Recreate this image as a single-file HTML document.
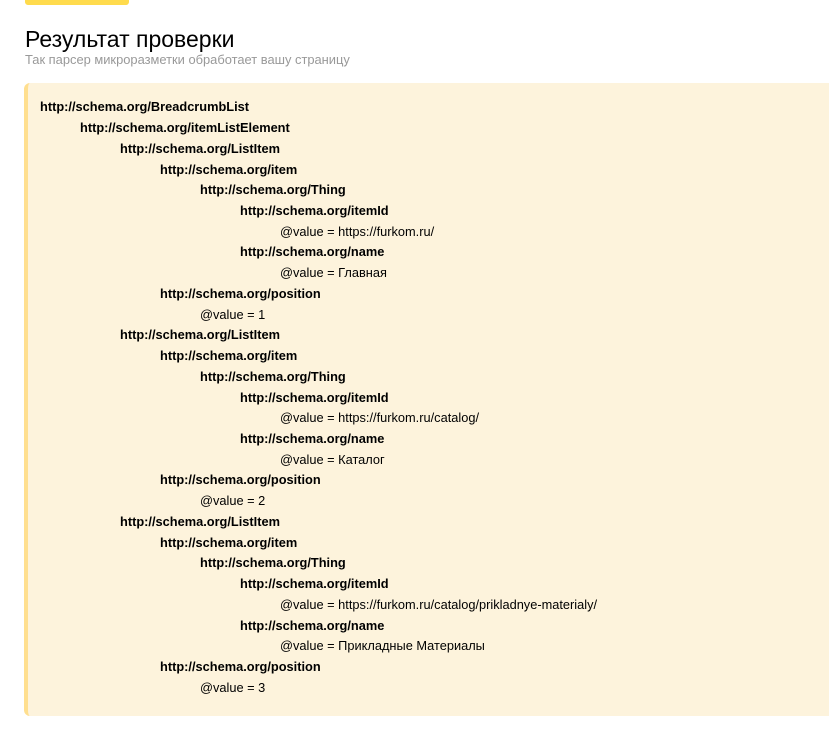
<!DOCTYPE html>
<html><head><meta charset="utf-8"><style>
html,body{margin:0;padding:0;background:#fff;width:829px;height:733px;overflow:hidden;font-family:"Liberation Sans",Arial,sans-serif;}
.bar{position:absolute;left:25px;top:0;width:104px;height:5px;background:#ffdb4d;border-radius:0 0 3px 3px;}
h1{position:absolute;left:25px;top:25px;margin:0;font-size:23px;font-weight:normal;color:#000;line-height:28px;}
.sub{position:absolute;left:25px;top:53px;font-size:12.9px;color:#999;line-height:14px;}
.box{position:absolute;left:24px;top:83px;width:830px;height:633px;background:#fdf3dc;border-left:4px solid #ffdf8f;border-radius:6px;box-sizing:border-box;}
.w{position:absolute;left:0;top:2px;}
.l{position:absolute;font-size:12.8px;line-height:16px;color:#000;white-space:nowrap;}
.b{font-weight:bold;}
</style></head><body>
<div class="bar"></div>
<h1>Результат проверки</h1>
<div class="sub">Так парсер микроразметки обработает вашу страницу</div>
<div class="box"></div>
<div class="w">
<div class="l b" style="left:40px;top:97px">http://schema.org/BreadcrumbList</div>
<div class="l b" style="left:80px;top:118px">http://schema.org/itemListElement</div>
<div class="l b" style="left:120px;top:139px">http://schema.org/ListItem</div>
<div class="l b" style="left:160px;top:160px">http://schema.org/item</div>
<div class="l b" style="left:200px;top:180px">http://schema.org/Thing</div>
<div class="l b" style="left:240px;top:201px">http://schema.org/itemId</div>
<div class="l" style="left:280px;top:222px">@value = https://furkom.ru/</div>
<div class="l b" style="left:240px;top:242px">http://schema.org/name</div>
<div class="l" style="left:280px;top:263px">@value = Главная</div>
<div class="l b" style="left:160px;top:284px">http://schema.org/position</div>
<div class="l" style="left:200px;top:305px">@value = 1</div>
<div class="l b" style="left:120px;top:325px">http://schema.org/ListItem</div>
<div class="l b" style="left:160px;top:346px">http://schema.org/item</div>
<div class="l b" style="left:200px;top:367px">http://schema.org/Thing</div>
<div class="l b" style="left:240px;top:388px">http://schema.org/itemId</div>
<div class="l" style="left:280px;top:408px">@value = https://furkom.ru/catalog/</div>
<div class="l b" style="left:240px;top:429px">http://schema.org/name</div>
<div class="l" style="left:280px;top:450px">@value = Каталог</div>
<div class="l b" style="left:160px;top:470px">http://schema.org/position</div>
<div class="l" style="left:200px;top:491px">@value = 2</div>
<div class="l b" style="left:120px;top:512px">http://schema.org/ListItem</div>
<div class="l b" style="left:160px;top:533px">http://schema.org/item</div>
<div class="l b" style="left:200px;top:553px">http://schema.org/Thing</div>
<div class="l b" style="left:240px;top:574px">http://schema.org/itemId</div>
<div class="l" style="left:280px;top:595px">@value = https://furkom.ru/catalog/prikladnye-materialy/</div>
<div class="l b" style="left:240px;top:616px">http://schema.org/name</div>
<div class="l" style="left:280px;top:636px">@value = Прикладные Материалы</div>
<div class="l b" style="left:160px;top:657px">http://schema.org/position</div>
<div class="l" style="left:200px;top:678px">@value = 3</div>
</div>
</body></html>
